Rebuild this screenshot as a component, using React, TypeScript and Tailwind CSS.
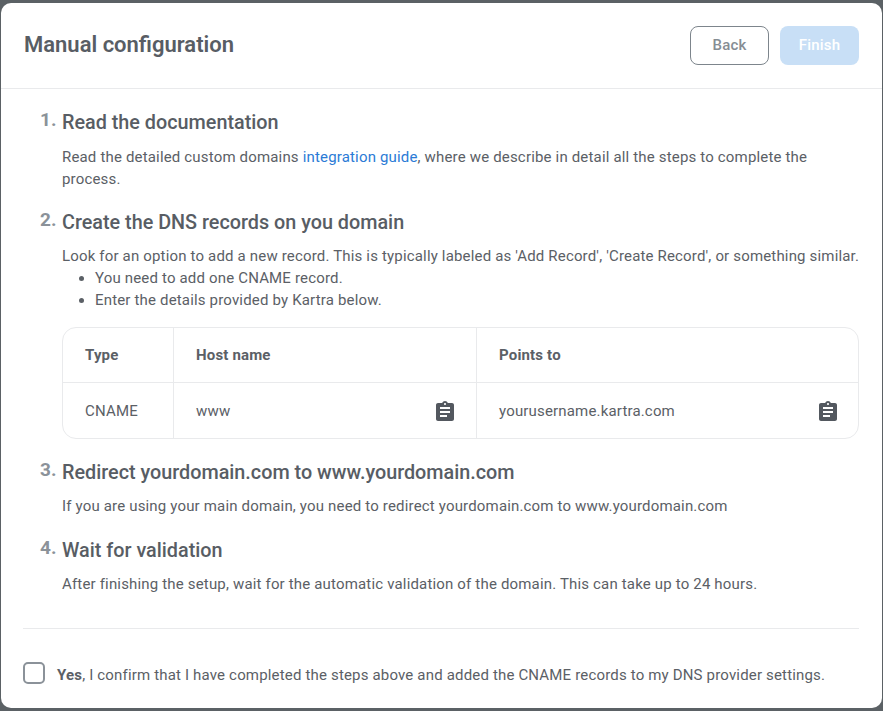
import { MdAssignment } from "react-icons/md";

function Step({ num, title, className, children }: { num: string; title: string; className?: string; children: React.ReactNode }) {
  return (
    <section className={`flex ${className ?? ""}`}>
      <span className="w-[22px] shrink-0 text-[19px] leading-[24px] font-bold tracking-normal text-[#8b9299]">{num}</span>
      <div className="min-w-0 flex-1">
        <h3 className="mt-px text-[19.8px] leading-[28px] font-medium tracking-normal text-[#585d64]">{title}</h3>
        {children}
      </div>
    </section>
  );
}

function CopyCell({ text, className }: { text: string; className: string }) {
  return (
    <div className={`flex items-center justify-between pt-[2px] pl-[22px] ${className}`}>
      <span>{text}</span>
      <MdAssignment className="h-[24px] w-[24px] text-[#53585f]" />
    </div>
  );
}

export default function App() {
  return (
    <div className="h-[711px] bg-[#5b6165] px-px py-[3px] font-['Roboto',sans-serif] text-[15px] tracking-[0.17px] text-[#5b6066]">
      <div className="flex h-[705px] flex-col rounded-[10px] bg-white">
        <header className="flex h-[86px] items-center justify-between border-b border-[#e9eaec] pr-[23px] pl-[23px]">
          <h2 className="-mt-[2px] text-[22px] font-semibold tracking-normal text-[#585d64]">Manual configuration</h2>
          <div className="flex gap-[11px]">
            <button className="h-[39px] w-[79px] rounded-[8px] border border-[#7d858c] bg-white text-[15px] font-medium text-[#868d94]">Back</button>
            <button className="h-[39px] w-[79px] rounded-[8px] bg-[#c8dff6] text-[15px] font-medium text-white">Finish</button>
          </div>
        </header>

        <div className="flex-1 pt-[19px] pr-[23px] pl-[39px]">
          <Step num="1." title="Read the documentation">
            <p className="mt-[9px] leading-[22px]">
              Read the detailed custom domains <a className="text-[#2b7bd6]">integration guide</a>, where we describe in detail all the steps to complete the process.
            </p>
          </Step>

          <Step num="2." title="Create the DNS records on you domain" className="mt-[18px]">
            <p className="mt-[8px] leading-[22px] whitespace-nowrap">
              Look for an option to add a new record. This is typically labeled as 'Add Record', 'Create Record', or something similar.
            </p>
            <ul className="list-disc pl-[33px] leading-[22px]">
              <li>You need to add one CNAME record.</li>
              <li>Enter the details provided by Kartra below.</li>
            </ul>
            <div className="mt-[16px] grid grid-cols-[111px_303px_1fr] rounded-[14px] border border-[#e9eaec]">
              <div className="flex h-[55px] items-center border-r border-b border-[#e9eaec] pl-[22px] font-bold">Type</div>
              <div className="flex h-[55px] items-center border-r border-b border-[#e9eaec] pl-[22px] font-bold">Host name</div>
              <div className="flex h-[55px] items-center border-b border-[#e9eaec] pl-[22px] font-bold">Points to</div>
              <div className="flex h-[55px] items-center border-r border-[#e9eaec] pt-[2px] pl-[22px]">CNAME</div>
              <CopyCell text="www" className="h-[55px] border-r border-[#e9eaec] pr-[19px]" />
              <CopyCell text="yourusername.kartra.com" className="h-[55px] pr-[18px]" />
            </div>
          </Step>

          <Step num="3." title="Redirect yourdomain.com to www.yourdomain.com" className="mt-[19px]">
            <p className="mt-[8px] leading-[22px]">If you are using your main domain, you need to redirect yourdomain.com to www.yourdomain.com</p>
          </Step>

          <Step num="4." title="Wait for validation" className="mt-[19px]">
            <p className="mt-[8px] leading-[22px]">After finishing the setup, wait for the automatic validation of the domain. This can take up to 24 hours.</p>
          </Step>
        </div>

        <footer className="mr-[23px] ml-[22px] flex h-[80px] items-center gap-[12px] border-t border-[#e9eaec] pt-[8px]">
          <span className="h-[22px] w-[22px] shrink-0 rounded-[5px] border-2 border-[#8b9299] bg-white" />
          <p className="mt-[6px]">
            <b className="font-bold">Yes</b>, I confirm that I have completed the steps above and added the CNAME records to my DNS provider settings.
          </p>
        </footer>
      </div>
    </div>
  );
}
